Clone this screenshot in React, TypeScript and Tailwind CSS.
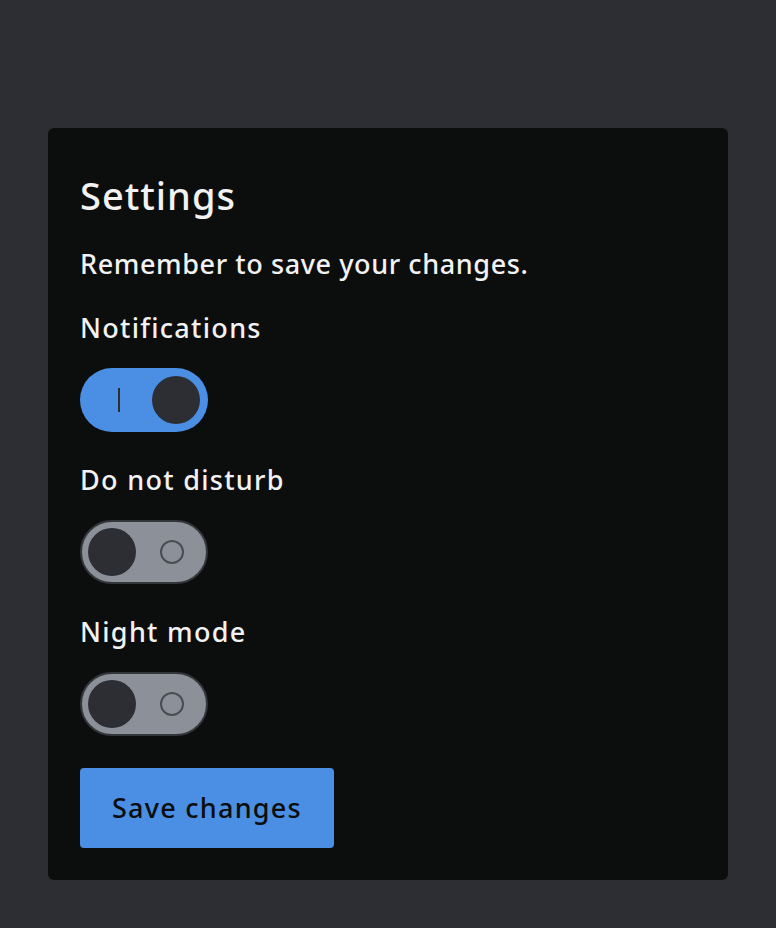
import { useState } from "react";

function Toggle({ on, onChange }: { on: boolean; onChange: () => void }) {
  return (
    <button
      onClick={onChange}
      className={
        on
          ? "flex h-16 w-32 items-center justify-between rounded-full bg-[#4a8fe3] pl-[38px] pr-2"
          : "flex h-16 w-32 items-center justify-between rounded-full border-2 border-[#33363b] bg-[#8b9099] pl-[6px] pr-[22px]"
      }
    >
      {on ? (
        <>
          <span className="h-6 w-[2px] bg-[#2c2e33]" />
          <span className="h-12 w-12 rounded-full bg-[#2c2e33]" />
        </>
      ) : (
        <>
          <span className="h-12 w-12 rounded-full bg-[#2c2e33]" />
          <span className="h-6 w-6 rounded-full border-2 border-[#4a4d53]" />
        </>
      )}
    </button>
  );
}

export default function App() {
  const [settings, setSettings] = useState({
    notifications: true,
    dnd: false,
    night: false,
  });

  const rows: { key: keyof typeof settings; label: string }[] = [
    { key: "notifications", label: "Notifications" },
    { key: "dnd", label: "Do not disturb" },
    { key: "night", label: "Night mode" },
  ];

  return (
    <div
      className="min-h-[928px] bg-[#2c2e33] px-12 pt-32 pb-12 text-[#f2f2f2]"
      style={{ fontFamily: '"Noto Sans", "Open Sans", sans-serif' }}
    >
      <div className="flex flex-col rounded-md bg-[#0c0d0d] p-8">
        <h1 className="text-[38px] leading-[70px] font-medium tracking-[1px]">Settings</h1>
        <p className="mt-4 text-[27px] leading-9 font-medium tracking-[0.6px]">Remember to save your changes.</p>
        {rows.map((row, i) => (
          <div key={row.key} className={i === 0 ? "mt-7 flex flex-col items-start" : "mt-[30px] flex flex-col items-start"}>
            <span className="text-[27px] leading-9 font-medium tracking-[1.3px]">{row.label}</span>
            <div className="mt-[22px]">
              <Toggle
                on={settings[row.key]}
                onChange={() => setSettings({ ...settings, [row.key]: !settings[row.key] })}
              />
            </div>
          </div>
        ))}
        <button className="mt-8 h-20 w-[254px] rounded bg-[#4a8fe3] text-[27px] font-medium tracking-[1.25px] text-[#0c0d0d]">
          Save changes
        </button>
      </div>
    </div>
  );
}
